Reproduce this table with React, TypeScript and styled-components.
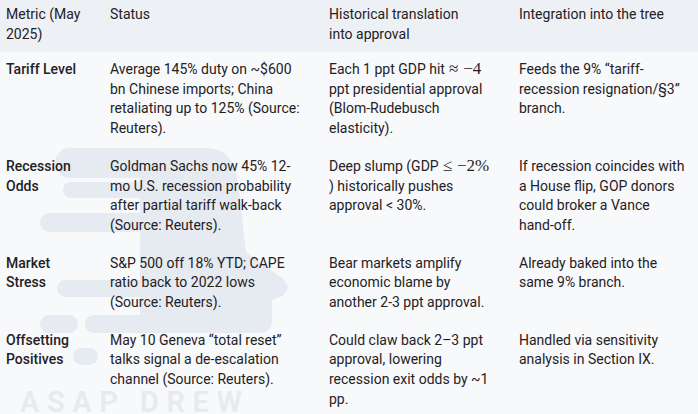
import React from "react";
import styled, { createGlobalStyle } from "styled-components";

const GlobalStyle = createGlobalStyle`
  html, body {
    margin: 0;
    padding: 0;
    background: #f8f9fb;
  }
  body {
    font-family: Roboto, "Noto Sans", "Liberation Sans", sans-serif;
    color: #1f2124;
  }
`;

const Frame = styled.div`
  position: relative;
  width: 698px;
  height: 414px;
  overflow: hidden;
  background: #f8f9fb;
`;

const Watermark = styled.svg`
  position: absolute;
  inset: 0;
  pointer-events: none;
  z-index: 0;
`;

const Table = styled.div`
  position: relative;
  z-index: 1;
  display: flex;
  flex-direction: column;
`;

const Row = styled.div<{ $head?: boolean }>`
  display: grid;
  grid-template-columns: 104px 219px 190px 185px;
  background: ${(p) => (p.$head ? "#edf0f4" : "transparent")};
  padding: ${(p) => (p.$head ? "5px 0 8px" : "8px 0 10.4px")};
`;

const Cell = styled.div<{ $label?: boolean }>`
  padding: 0 14px 0 6px;
  font-size: 14px;
  line-height: 19.6px;
  font-weight: ${(p) => (p.$label ? 500 : 400)};
  color: #1f2124;
  &:nth-child(4) {
    padding-right: 10px;
  }
`;

const NoWrap = styled.span`
  white-space: nowrap;
`;

const Math = styled.span`
  display: inline-block;
  font-family: "Liberation Serif", "DejaVu Serif", serif;
  font-size: 17px;
  line-height: 1;
  margin-left: 4px;
`;

const Rel = styled.span`
  margin-right: 5px;
`;

const rows: { label: string; status: React.ReactNode; hist: React.ReactNode; integ: React.ReactNode }[] = [
  {
    label: "Tariff Level",
    status: "Average 145% duty on ~$600 bn Chinese imports; China retaliating up to 125% (Source: Reuters).",
    hist: (
      <>
        Each 1 ppt GDP hit
        <Math>
          <Rel>≈</Rel>−4
        </Math>{" "}
        ppt presidential approval (Blom-Rudebusch elasticity).
      </>
    ),
    integ: "Feeds the 9% “tariff-recession resignation/§3” branch.",
  },
  {
    label: "Recession Odds",
    status: "Goldman Sachs now 45% 12-mo U.S. recession probability after partial tariff walk-back (Source: Reuters).",
    hist: (
      <>
        Deep slump (GDP
        <Math>
          <Rel>≤</Rel>−2%
        </Math>
        <br />) historically pushes approval &lt; 30%.
      </>
    ),
    integ: (
      <>
        If recession coincides with a House flip, GOP donors could broker a Vance <NoWrap>hand-off.</NoWrap>
      </>
    ),
  },
  {
    label: "Market Stress",
    status: "S&P 500 off 18% YTD; CAPE ratio back to 2022 lows (Source: Reuters).",
    hist: "Bear markets amplify economic blame by another 2-3 ppt approval.",
    integ: "Already baked into the same 9% branch.",
  },
  {
    label: "Offsetting Positives",
    status: "May 10 Geneva “total reset” talks signal a de-escalation channel (Source: Reuters).",
    hist: "Could claw back 2–3 ppt approval, lowering recession exit odds by ~1 pp.",
    integ: "Handled via sensitivity analysis in Section IX.",
  },
];

const WM = "#e6eaf1";

export default function App() {
  return (
    <>
      <GlobalStyle />
      <Frame>
        <Watermark width="698" height="414" viewBox="0 0 698 414">
          <g fill={WM}>
            <path d="M140 148 L205 148 Q234 148 238 182 L246 252 L283 279 Q293 288 282 296 L272 300 L272 320 Q272 333 258 333 L140 333 Z" />
            <rect x="55" y="148" width="160" height="30" rx="15" />
            <rect x="63" y="182" width="120" height="16" rx="8" />
            <rect x="40" y="213" width="120" height="19" rx="9.5" />
            <rect x="57" y="280" width="120" height="17" rx="8.5" />
            <rect x="40" y="315" width="38" height="18" rx="9" />
            <rect x="85" y="315" width="120" height="18" rx="9" />
            <rect x="73" y="348" width="25" height="17" rx="8.5" />
            <text
              x="20"
              y="412"
              fontFamily="Roboto, 'Liberation Sans', sans-serif"
              fontSize="29"
              fontWeight="600"
              textLength="222"
              lengthAdjust="spacing"
            >
              ASAP DREW
            </text>
          </g>
        </Watermark>
        <Table>
          <Row $head>
            <Cell>Metric (May 2025)</Cell>
            <Cell>Status</Cell>
            <Cell>
              Historical translation
              <br />
              into approval
            </Cell>
            <Cell>Integration into the tree</Cell>
          </Row>
          {rows.map((r) => (
            <Row key={r.label}>
              <Cell $label>{r.label}</Cell>
              <Cell>{r.status}</Cell>
              <Cell>{r.hist}</Cell>
              <Cell>{r.integ}</Cell>
            </Row>
          ))}
        </Table>
      </Frame>
    </>
  );
}
